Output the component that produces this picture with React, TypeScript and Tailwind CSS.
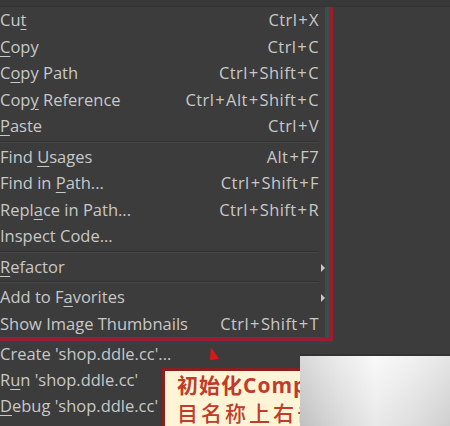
import React from "react";

type Item = { label: string; key?: string; sub?: boolean } | "sep";

const menu_items: Item[] = [
  { label: "Cu&t", key: "Ctrl+X" },
  { label: "&Copy", key: "Ctrl+C" },
  { label: "C&opy Path", key: "Ctrl+Shift+C" },
  { label: "Cop&y Reference", key: "Ctrl+Alt+Shift+C" },
  { label: "&Paste", key: "Ctrl+V" },
  "sep",
  { label: "Find &Usages", key: "Alt+F7" },
  { label: "Find in &Path...", key: "Ctrl+Shift+F" },
  { label: "Repl&ace in Path...", key: "Ctrl+Shift+R" },
  { label: "Inspect Code..." },
  "sep",
  { label: "&Refactor", sub: true },
  "sep",
  { label: "Add to F&avorites", sub: true },
  { label: "Show Image Thumbnails", key: "Ctrl+Shift+T" },
];

const lower_items = [
  "Create 'shop.ddle.cc'...",
  "R&un 'shop.ddle.cc'",
  "&Debug 'shop.ddle.cc'",
  "Run 'shop.ddle.cc' with Coverage",
];

function Label({ text }: { text: string }) {
  const i = text.indexOf("&");
  if (i < 0) return <span>{text}</span>;
  return (
    <span>
      {text.slice(0, i)}
      <span className="underline underline-offset-[3px] decoration-1">{text[i + 1]}</span>
      {text.slice(i + 2)}
    </span>
  );
}

// shortcut text: the "+" gets a little air, like the Windows menu font
function Shortcut({ text }: { text: string }) {
  const parts = text.split("+");
  return (
    <span className="tracking-[0.4px]">
      {parts.map((p, i) => (
        <React.Fragment key={i}>
          {i > 0 && <span className="mx-[1px]">+</span>}
          {p}
        </React.Fragment>
      ))}
    </span>
  );
}

function Separator() {
  return (
    <div className="h-[4px] flex flex-col justify-center">
      <div className="h-px bg-[#303030]" />
      <div className="h-px bg-[#474747]" />
    </div>
  );
}

export default function App() {
  return (
    <div
      className="relative w-[450px] h-[426px] overflow-hidden bg-[#3c3c3c] text-[#c8c8c8] text-[16.5px]"
      style={{ fontFamily: '"Open Sans", "Noto Sans", sans-serif' }}
    >
      <div className="h-[7px] bg-[#383838] border-b border-[#333]" />

      <div className="flex">
        <div className="w-[333px] border-r-4 border-b-4 border-[#9c1d2d]">
          <div className="border-r-[4px] border-[#394f4b] pr-[6px]">
            {menu_items.map((item, idx) =>
              item === "sep" ? (
                <Separator key={idx} />
              ) : (
                <div key={idx} className="h-[26.5px] flex items-center justify-between leading-none relative">
                  <Label text={item.label} />
                  {item.key && <Shortcut text={item.key} />}
                  {item.sub && (
                    <span className="absolute right-[-6px] top-[10px] w-0 h-0 border-y-[4px] border-y-transparent border-l-[4px] border-l-[#c8c8c8]" />
                  )}
                </div>
              )
            )}
          </div>
        </div>
      </div>
      <div className="w-[333px] h-[3px] bg-[#34404c]" />

      <div className="-mt-[3px]">
        {lower_items.map((t) => (
          <div key={t} className="h-[26px] flex items-center leading-none">
            <Label text={t} />
          </div>
        ))}
      </div>

      {/* red pointer */}
      <svg className="absolute left-[207px] top-[346px]" width="14" height="16" viewBox="0 0 14 16">
        <path d="M4 1 L12 13 L3 14 Z" fill="#e01414" />
      </svg>

      {/* callout */}
      <div
        className="absolute left-[162px] top-[368px] w-[300px] h-[80px] bg-[#fff5d6] border-l-[3px] border-t-[3px] border-[#8a1f1f] pl-[12px] text-[#bf3b2a] text-[21px] leading-[27px]"
        style={{ fontFamily: '"Noto Sans CJK SC", "Noto Sans", sans-serif' }}
      >
        <div className="tracking-[1px] font-bold">
          初始化<span style={{ fontFamily: '"Open Sans", sans-serif' }}>Composer</span>
        </div>
        <div className="tracking-[3px] font-medium">目名称上右击</div>
      </div>

      {/* blurred patch */}
      <div className="absolute left-[300px] top-[354px] w-[150px] h-[72px] border-t-2 border-[#333] bg-[linear-gradient(to_right,#cccccc_0%,#e4e4e4_25%,#f7f7f7_50%,#ececec_75%,#dcdcdc_100%)]">
        <div className="w-full h-full bg-[linear-gradient(to_bottom,rgba(255,255,255,0.25),rgba(0,0,0,0.06))]" />
      </div>
    </div>
  );
}
